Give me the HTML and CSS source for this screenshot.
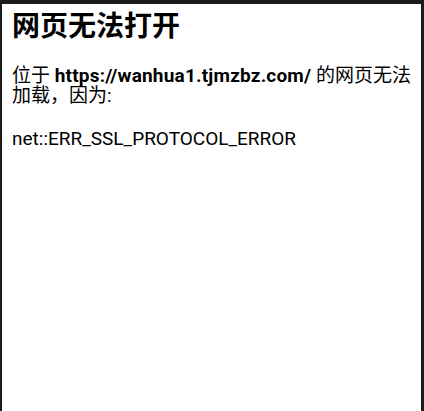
FILE: index.html
```html
<!DOCTYPE html>
<html lang="zh-CN">
<head>
<meta charset="utf-8">
<title>网页无法打开</title>
<link rel="stylesheet" href="styles.css">
</head>
<body>
<div class="frame">
  <h1 class="title">网页无法打开</h1>
  <p class="msg">位于 <strong>https://wanhua1.tjmzbz.com/</strong> 的网页无法加载，因为:</p>
  <p class="code">net::ERR_SSL_PROTOCOL_ERROR</p>
</div>
</body>
</html>
```
FILE: styles.css
```css
html, body {
  margin: 0;
  padding: 0;
  background: #ffffff;
}
.frame {
  box-sizing: border-box;
  width: 424px;
  height: 411px;
  border-top: 4px solid #1c1c1c;
  border-left: 2px solid #1c1c1c;
  border-right: 3px solid #1c1c1c;
  padding: 6px 10px 0 10px;
  font-family: "Roboto", "Noto Sans CJK SC", sans-serif;
  color: #000;
}
.title {
  margin: 0;
  font-size: 28px;
  font-weight: 700;
  line-height: 34px;
}
.msg {
  margin: 22px 0 0 0;
  font-size: 19px;
  line-height: 20px;
}
.msg strong {
  font-weight: 700;
  letter-spacing: 0.2px;
}
.code {
  margin: 23px 0 0 0;
  font-size: 19px;
  line-height: 20px;
}
```
